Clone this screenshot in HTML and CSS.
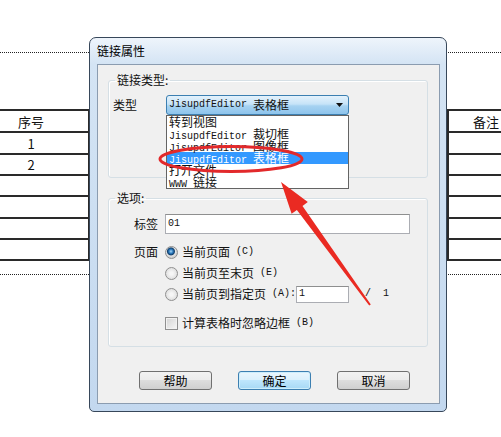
FILE: index.html
```html
<!DOCTYPE html>
<html lang="zh-CN">
<head>
    <meta charset="UTF-8">
    <title>链接属性</title>
    <link rel="stylesheet" href="styles.css">
</head>
<body>
<div class="page">
    <div class="dots dots-top"></div>

    <table class="sheet">
        <colgroup><col class="c1"><col class="c2"><col class="c3"></colgroup>
        <tr><td>序号</td><td></td><td>备注</td></tr>
        <tr><td>1</td><td></td><td></td></tr>
        <tr><td>2</td><td></td><td></td></tr>
        <tr><td></td><td></td><td></td></tr>
        <tr><td></td><td></td><td></td></tr>
        <tr><td></td><td></td><td></td></tr>
        <tr><td></td><td></td><td></td></tr>
    </table>

    <div class="dots dots-bottom"></div>

    <!-- dialog window -->
    <div class="dlg">
        <div class="dlg-title">链接属性</div>
        <div class="dlg-body">
            <fieldset class="group group-type">
                <legend>链接类型:</legend>
                <div class="row">
                    <span class="lbl lbl-left">类型</span>
                    <div class="combo">
                        <div class="combo-box">
                            <span class="lat">JisupdfEditor </span>表格框
                            <svg width="7" height="4" viewBox="0 0 7 4"><path d="M0 0h7L3.5 4z" fill="#111"/></svg>
                        </div>
                        <ul class="combo-list">
                            <li>转到视图</li>
                            <li><span class="lat">JisupdfEditor </span>裁切框</li>
                            <li><span class="lat">JisupdfEditor </span>图像框</li>
                            <li class="sel"><span class="lat">JisupdfEditor </span>表格框</li>
                            <li>打开文件</li>
                            <li><span class="lat">WWW </span>链接</li>
                        </ul>
                    </div>
                </div>
            </fieldset>

            <fieldset class="group group-opts">
                <legend>选项:</legend>
                <div class="row">
                    <span class="lbl">标签</span>
                    <div class="field"><span class="lat">01</span></div>
                </div>
                <div class="row opt first">
                    <span class="lbl">页面</span>
                    <span class="radio on"></span>当前页面<span class="lat"> (C)</span>
                </div>
                <div class="row opt">
                    <span class="lbl"></span>
                    <span class="radio"></span>当前页至末页<span class="lat"> (E)</span>
                </div>
                <div class="row opt">
                    <span class="lbl"></span>
                    <span class="radio"></span>当前页到指定页<span class="lat"> (A):</span>
                    <div class="field pgnum"><span class="lat">1</span></div>
                    <span class="lat total">/  1</span>
                </div>
                <div class="row opt check-row">
                    <span class="lbl"></span>
                    <span class="check"></span>计算表格时忽略边框<span class="lat"> (B)</span>
                </div>
            </fieldset>

            <div class="btns">
                <button class="btn">帮助</button>
                <button class="btn btn-default">确定</button>
                <button class="btn">取消</button>
            </div>
        </div>
    </div>

    <!-- red annotation -->
    <svg class="marks" viewBox="0 0 501 437" width="501" height="437">
        <ellipse cx="231" cy="159" rx="71" ry="12.5" fill="none" stroke="#e2292b" stroke-width="3"/>
        <polygon points="281,182 307.8,202 302.5,205.9 370.8,304.4 369.2,305.6 296.9,209.9 291.6,213.8" fill="#ea2a22"/>
    </svg>
</div>
</body>
</html>
```

FILE: styles.css
```css
* {
    box-sizing: border-box;
}
body {
    margin: 0;
    background: #fff;
    font-family: "Noto Sans CJK SC", "Noto Sans", sans-serif;
    font-size: 12px;
    color: #111;
}
.page {
    position: relative;
    width: 501px;
    height: 437px;
    overflow: hidden;
}

/* background sheet */
.dots {
    border-top: 1px dotted #222;
}
.dots-top {
    margin-top: 52px;
}
.dots-bottom {
    margin-top: 13px;
}
.sheet {
    margin: 56px 0 0 -28px;
    width: 551px;
    table-layout: fixed;
    border-collapse: collapse;
}
.sheet .c1 { width: 116px; }
.sheet .c2 { width: 359px; }
.sheet .c3 { width: 76px; }
.sheet td {
    border: 2px solid #2a2a2a;
    height: 21px;
    padding: 0;
    text-align: center;
    font-size: 13px;
    line-height: 1;
}
.sheet tr:nth-child(1) td,
.sheet tr:nth-child(2) td,
.sheet tr:nth-child(5) td {
    height: 22px;
}

/* dialog */
.dlg {
    position: absolute;
    left: 89px;
    top: 37px;
    width: 358px;
    height: 375px;
    border: 1px solid #37475a;
    border-radius: 7px 7px 5px 5px;
    background: linear-gradient(#eef4fb, #d4e4f4 7%, #c3d8ef);
    padding: 0 6px 7px 7px;
    display: flex;
    flex-direction: column;
}
.dlg-title {
    height: 26px;
    line-height: 26px;
    color: #000;
}
.dlg-body {
    flex: 1;
    background: #f0f0f0;
    border: 1px solid #8b9cb0;
    display: flex;
    flex-direction: column;
}

.group {
    margin: 0 11px 0 10px;
    padding: 0;
    border: 1px solid #d5dfe5;
    border-radius: 3px;
    box-shadow: inset 1px 1px #fff;
    min-width: 0;
}
.group legend {
    margin-left: 6px;
    padding: 0 2px;
    line-height: 16px;
}
.group-type {
    margin-top: 7px;
    padding: 7px 0 62px;
}
.group-opts {
    margin-top: 12px;
    padding: 8px 0 13px;
}

.row {
    display: flex;
    align-items: center;
    height: 20px;
    line-height: 16px;
}
.lbl {
    width: 56px;
    flex: none;
    text-align: right;
    padding-right: 7px;
}
.lbl-left {
    width: 57px;
    text-align: left;
    padding: 0 0 0 4px;
}
.lat {
    font-family: "Liberation Mono", monospace;
    font-size: 10px;
    white-space: pre;
}

/* combo box with open list */
.combo {
    position: relative;
    width: 183px;
}
.combo-box {
    height: 20px;
    border: 1px solid #3c7fb1;
    border-radius: 3px;
    background: linear-gradient(#e4f2fc, #c6e3f8 45%, #a6d2f1 55%, #8ec4ec);
    padding-left: 2px;
    display: flex;
    align-items: center;
}
.combo-box svg {
    margin-left: auto;
    margin-right: 5px;
}
.combo-list {
    position: absolute;
    left: 0;
    top: 100%;
    width: 100%;
    margin: 0;
    padding: 0;
    list-style: none;
    background: #fff;
    border: 1px solid #646464;
    z-index: 2;
}
.combo-list li {
    height: 12px;
    line-height: 12px;
    padding-left: 2px;
    white-space: nowrap;
}
.combo-list .sel {
    background: #3399ff;
    color: #fff;
}

/* options */
.field {
    width: 245px;
    height: 20px;
    border: 1px solid #abadb3;
    border-top-color: #8e8f8f;
    background: #fff;
    padding-left: 2px;
    display: flex;
    align-items: center;
}
.opt {
    margin-top: 1px;
}
.opt.first {
    margin-top: 8px;
}
.check-row {
    margin-top: 9px;
}
.radio {
    width: 13px;
    height: 13px;
    flex: none;
    margin-right: 4px;
    border-radius: 50%;
    border: 1px solid #8f8f8f;
    background: radial-gradient(circle at 50% 50%, #f6f6f6 20%, #d4d4d4 100%);
}
.radio.on {
    background: radial-gradient(circle at 45% 40%, #a8d8f6 0, #2d7cc0 2px, #123f6c 3.5px, #e6e6e6 4.5px, #d0d0d0 6px);
}
.check {
    width: 13px;
    height: 13px;
    flex: none;
    margin-right: 4px;
    border: 1px solid #8f8f8f;
    background: linear-gradient(135deg, #d3d3d3, #f7f7f7);
    box-shadow: inset 0 0 0 1px #f2f2f2;
}
.pgnum {
    width: 53px;
    height: 17px;
    margin-left: 0;
}
.total {
    margin-left: 16px;
}

/* buttons */
.btns {
    display: flex;
    gap: 26px;
    padding-left: 41px;
    margin-top: 24px;
}
.btn {
    width: 73px;
    height: 19px;
    padding: 0;
    border: 1px solid #707070;
    border-radius: 3px;
    background: linear-gradient(#f2f2f2, #ebebeb 50%, #dddddd 50%, #cfcfcf);
    font-family: "Noto Sans CJK SC", sans-serif;
    font-size: 12px;
    line-height: 16px;
    color: #000;
}
.btn-default {
    border-color: #3c7fb1;
    background: linear-gradient(#eaf6fd, #d9f0fc 50%, #bee6fd 50%, #a7d9f5);
    box-shadow: inset 0 0 0 1px #cdeefc;
}

/* annotation overlay */
.marks {
    position: absolute;
    left: 0;
    top: 0;
    pointer-events: none;
    z-index: 5;
}
```
